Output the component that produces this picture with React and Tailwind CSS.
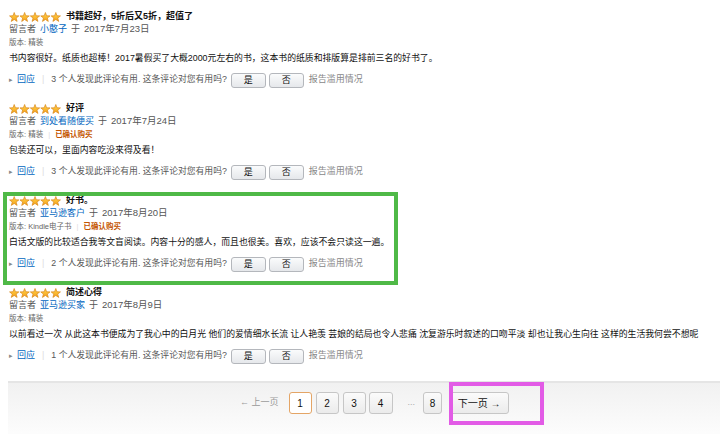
const reviews = [
  {
    title: '书籍超好，5折后又5折，超值了',
    author: '小憨子',
    date: '2017年7月23日',
    edition: '精装',
    verified: false,
    body: '书内容很好。纸质也超棒！2017暑假买了大概2000元左右的书，这本书的纸质和排版算是排前三名的好书了。',
    helpful: 3,
  },
  {
    title: '好评',
    author: '到处看随便买',
    date: '2017年7月24日',
    edition: '精装',
    verified: true,
    body: '包装还可以，里面内容吃没来得及看！',
    helpful: 3,
  },
  {
    title: '好书。',
    author: '亚马逊客户',
    date: '2017年8月20日',
    edition: 'Kindle电子书',
    verified: true,
    body: '白话文版的比较适合我等文盲阅读。内容十分的感人，而且也很美。喜欢，应该不会只读这一遍。',
    helpful: 2,
    highlight: true,
  },
  {
    title: '简述心得',
    author: '亚马逊买家',
    date: '2017年8月9日',
    edition: '精装',
    verified: false,
    body: '以前看过一次 从此这本书便成为了我心中的白月光 他们的爱情细水长流 让人艳羡 芸娘的结局也令人悲痛 沈复游乐时叙述的口吻平淡 却也让我心生向往 这样的生活我何尝不想呢',
    helpful: 1,
  },
];

const starPts =
  '5.2,0.5 6.4,3.75 9.85,3.9 7.15,6.05 8.1,9.4 5.2,7.45 2.3,9.4 3.25,6.05 0.55,3.9 4.0,3.75';

const Stars = () => (
  <svg width="52" height="10" viewBox="0 0 52 10">
    <defs>
      <linearGradient id="sg" x1="0" y1="0" x2="0" y2="1">
        <stop offset="0" stopColor="#ffd54a" />
        <stop offset="1" stopColor="#f6a21c" />
      </linearGradient>
    </defs>
    {[0, 1, 2, 3, 4].map((i) => (
      <polygon
        key={i}
        points={starPts}
        transform={`translate(${i * 10.4} 0)`}
        fill="url(#sg)"
        stroke="#d9861a"
        strokeWidth="0.7"
        strokeLinejoin="round"
      />
    ))}
  </svg>
);

const VoteButton = ({ label }) => (
  <button className="h-[15px] w-[35px] rounded-[3px] border border-[#b4b7bc] bg-gradient-to-b from-[#fafbfc] to-[#e6e8eb] text-[9px] leading-none text-[#111]">
    {label}
  </button>
);

const Review = ({ r }) => (
  <div className="relative h-[92px] pl-[9px]">
    {r.highlight && (
      <div className="pointer-events-none absolute left-[3px] top-[-2px] h-[93px] w-[395px] border-4 border-[#4fb947]" />
    )}
    <div className="flex h-[13px] items-center gap-[5px]">
      <Stars />
      <span className="text-[9px] font-bold text-[#111]">{r.title}</span>
    </div>
    <div className="flex h-[13px] items-center text-[9px] text-[#555]">
      <span>留言者</span>
      <span className="ml-[4px] text-[#0066c0]">{r.author}</span>
      <span className="ml-[4px]">于</span>
      <span className="ml-[4px] text-[9.5px]">{r.date}</span>
    </div>
    <div className="flex h-[13px] items-center text-[7.5px] text-[#666]">
      <span>版本: {r.edition}</span>
      {r.verified && (
        <>
          <span className="mx-[5px] text-[#ddd]">|</span>
          <span className="font-bold text-[#c45500]">已确认购买</span>
        </>
      )}
    </div>
    <div className="flex h-[20px] items-center text-[8.85px] text-[#111]">{r.body}</div>
    <div className="flex h-[22px] items-center text-[9px] text-[#555]">
      <span className="text-[7px] text-[#888]">▸</span>
      <span className="ml-[4px] text-[#0066c0]">回应</span>
      <span className="ml-[7px] text-[#ddd]">|</span>
      <span className="ml-[7px] text-[8.8px]">{r.helpful} 个人发现此评论有用. 这条评论对您有用吗?</span>
      <div className="ml-[4px] flex gap-[3px]">
        <VoteButton label="是" />
        <VoteButton label="否" />
      </div>
      <span className="ml-[5px] text-[#888]">报告滥用情况</span>
    </div>
  </div>
);

const PageButton = ({ children, active, className = '' }) => (
  <div
    className={`flex h-[22px] items-center justify-center rounded-[3px] border text-[10px] text-[#111] ${
      active
        ? 'border-[#e4a566] bg-white'
        : 'border-[#c6c6c6] bg-gradient-to-b from-[#fbfbfb] to-[#ebebeb]'
    } ${className}`}
  >
    {children}
  </div>
);

export default function App() {
  return (
    <div className="h-[434px] w-[720px] overflow-hidden bg-white pt-[10px] font-['Liberation_Sans','Noto_Sans_CJK_SC',sans-serif]">
      {reviews.map((r, i) => (
        <Review key={i} r={r} />
      ))}

      <div className="relative ml-[8px] mt-[3px] h-[60px] border-t-2 border-[#e5e5e5] bg-gradient-to-b from-[#f1f1f1] to-[#fefefe]">
        <div className="flex items-center pl-[232px] pt-[9px]">
          <span className="text-[9px] text-[#999]">← 上一页</span>
          <PageButton active className="ml-[10px] w-[23px]">1</PageButton>
          <PageButton className="ml-[4px] w-[23px]">2</PageButton>
          <PageButton className="ml-[4px] w-[23px]">3</PageButton>
          <PageButton className="ml-[3px] w-[24px]">4</PageButton>
          <span className="ml-[15px] text-[9px] text-[#aaa]">...</span>
          <PageButton className="ml-[8px] w-[19px]">8</PageButton>
          <PageButton className="ml-[7px] w-[60px] text-[9px]">下一页 →</PageButton>
        </div>
        <div className="pointer-events-none absolute left-[441px] top-[-1px] h-[43px] w-[95px] border-4 border-[#e25be6]" />
      </div>
    </div>
  );
}
